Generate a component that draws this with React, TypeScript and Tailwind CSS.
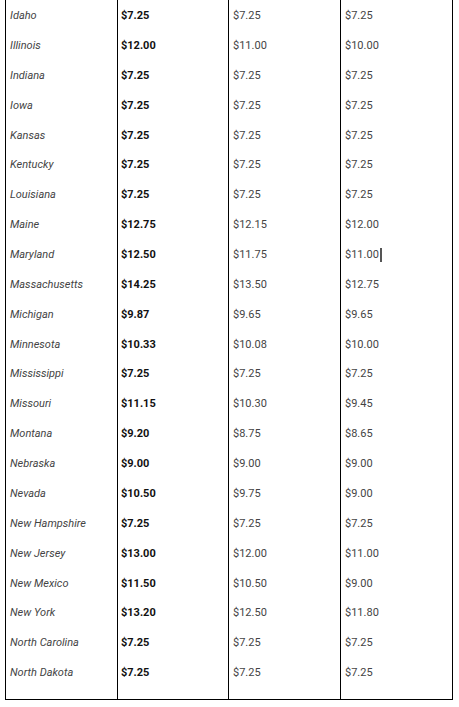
import React from "react";

const rows: [string, string, string, string][] = [
  ["Idaho", "$7.25", "$7.25", "$7.25"],
  ["Illinois", "$12.00", "$11.00", "$10.00"],
  ["Indiana", "$7.25", "$7.25", "$7.25"],
  ["Iowa", "$7.25", "$7.25", "$7.25"],
  ["Kansas", "$7.25", "$7.25", "$7.25"],
  ["Kentucky", "$7.25", "$7.25", "$7.25"],
  ["Louisiana", "$7.25", "$7.25", "$7.25"],
  ["Maine", "$12.75", "$12.15", "$12.00"],
  ["Maryland", "$12.50", "$11.75", "$11.00"],
  ["Massachusetts", "$14.25", "$13.50", "$12.75"],
  ["Michigan", "$9.87", "$9.65", "$9.65"],
  ["Minnesota", "$10.33", "$10.08", "$10.00"],
  ["Mississippi", "$7.25", "$7.25", "$7.25"],
  ["Missouri", "$11.15", "$10.30", "$9.45"],
  ["Montana", "$9.20", "$8.75", "$8.65"],
  ["Nebraska", "$9.00", "$9.00", "$9.00"],
  ["Nevada", "$10.50", "$9.75", "$9.00"],
  ["New Hampshire", "$7.25", "$7.25", "$7.25"],
  ["New Jersey", "$13.00", "$12.00", "$11.00"],
  ["New Mexico", "$11.50", "$10.50", "$9.00"],
  ["New York", "$13.20", "$12.50", "$11.80"],
  ["North Carolina", "$7.25", "$7.25", "$7.25"],
  ["North Dakota", "$7.25", "$7.25", "$7.25"],
];

export default function App() {
  return (
    <div className="bg-white w-[459px] h-[707px] overflow-hidden" style={{ fontFamily: "Roboto, 'Liberation Sans', sans-serif" }}>
      <div className="ml-[5px] w-[448px] border-l border-b border-black grid grid-cols-[112px_111px_112px_112px] text-[11px]">
        <div className="border-r border-black pt-[1.5px] pb-[10.5px]">
          {rows.map((r) => (
            <div key={r[0]} className="h-[29.86px] flex items-center pl-[4px] italic text-[#444]">
              {r[0]}
            </div>
          ))}
        </div>
        <div className="border-r border-black pt-[1.5px] pb-[10.5px]">
          {rows.map((r) => (
            <div key={r[0]} className="h-[29.86px] flex items-center pl-[3px] font-bold text-[#111]">
              {r[1]}
            </div>
          ))}
        </div>
        <div className="border-r border-black pt-[1.5px] pb-[10.5px]">
          {rows.map((r) => (
            <div key={r[0]} className="h-[29.86px] flex items-center pl-[4px] text-[#444]">
              {r[2]}
            </div>
          ))}
        </div>
        <div className="border-r border-black pt-[1.5px] pb-[10.5px]">
          {rows.map((r) => (
            <div key={r[0]} className="h-[29.86px] flex items-center pl-[4px] text-[#444]">
              {r[3]}
              {r[0] === "Maryland" && <span className="inline-block w-[2px] h-[14px] ml-[1px] bg-[#555]" />}
            </div>
          ))}
        </div>
      </div>
    </div>
  );
}
